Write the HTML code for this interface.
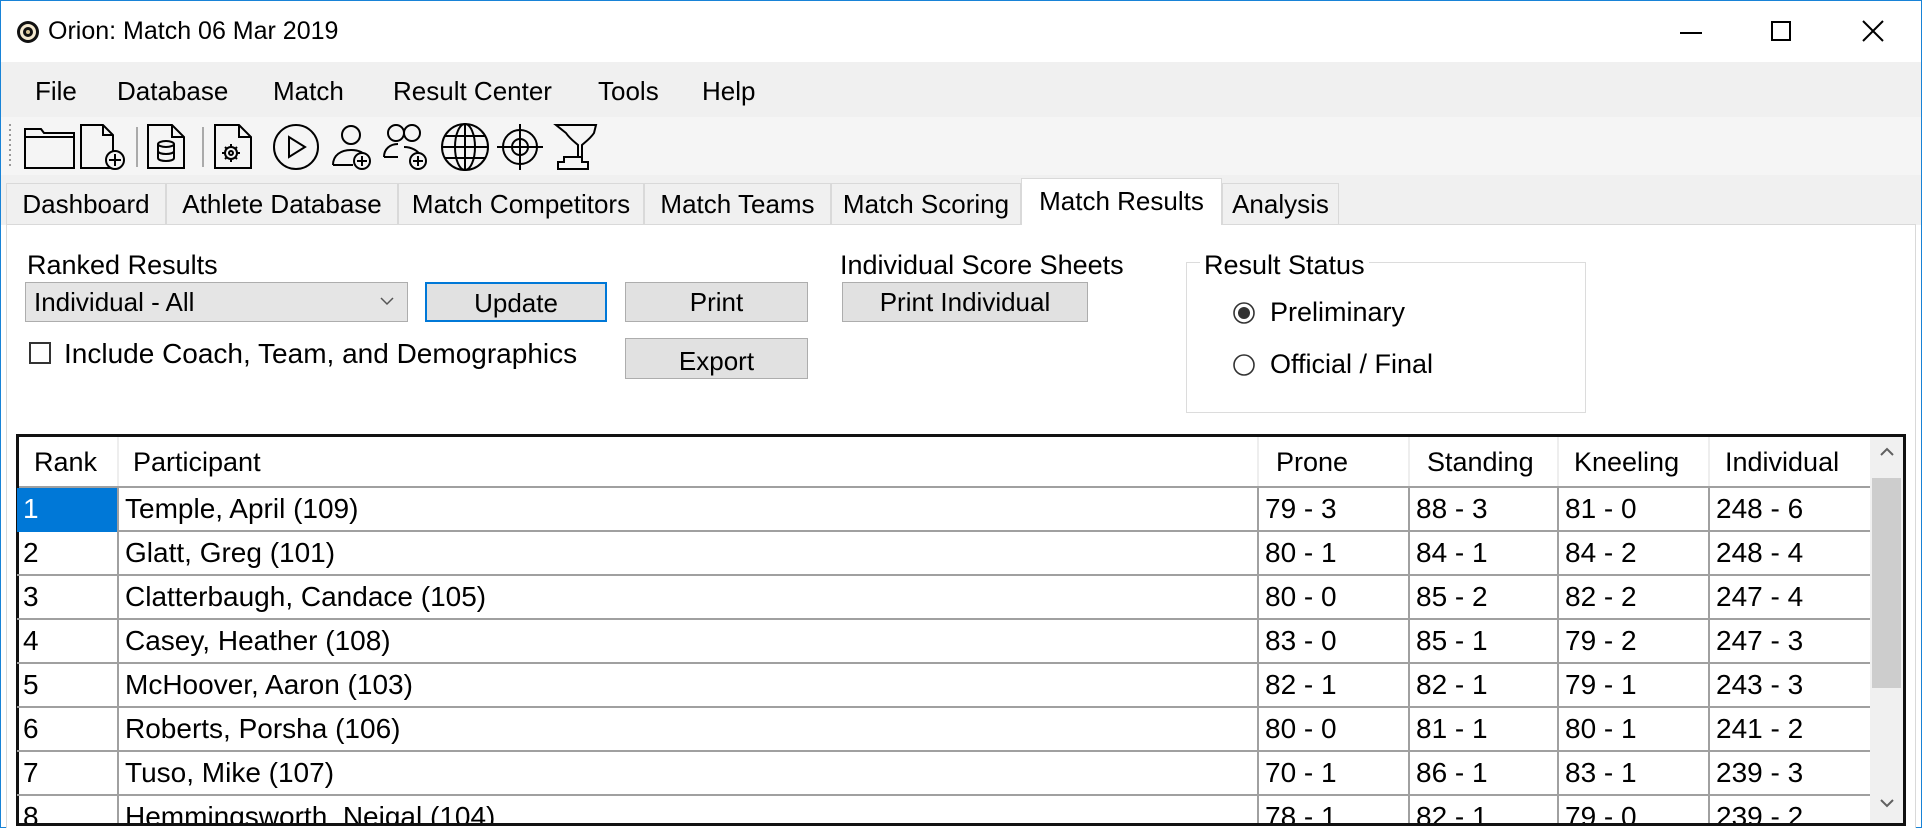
<!DOCTYPE html>
<html><head><meta charset="utf-8"><style>
*{margin:0;padding:0;box-sizing:border-box}
body{width:1922px;height:828px;position:relative;background:#fff;font-family:"Liberation Sans",Arial,sans-serif;color:#000;overflow:hidden}
.a{position:absolute;white-space:nowrap}
.t{font-size:26px;line-height:30px}
.btn{position:absolute;background:#e1e1e1;border:1px solid #adadad;font-size:26px;text-align:center}
.tab{position:absolute;top:183px;height:41px;background:#f0f0f0;border:1px solid #d9d9d9;border-bottom:none;font-size:26px;line-height:40px;text-align:center}
.row{position:absolute;left:17px;width:1853px;height:44px;border-bottom:2px solid #a0a0a0;font-size:28px;line-height:42px}
.c{position:absolute;top:0;height:44px;border-right:2px solid #a0a0a0;padding-left:6px}
</style></head><body>
<div class="a" style="left:0;top:0;width:1922px;height:828px;border:1px solid #1883d7"></div>
<svg class="a" style="left:16px;top:20px" width="24" height="24" viewBox="0 0 24 24"><circle cx="12" cy="12" r="11" fill="#111"/><circle cx="12" cy="12" r="8" fill="#f4e9cf"/><circle cx="12" cy="12" r="5" fill="#111"/><circle cx="12" cy="12" r="2" fill="#d9c79a"/></svg>
<div class="a" style="left:48px;top:16px;font-size:25px;line-height:30px">Orion: Match 06 Mar 2019</div>
<div class="a" style="left:1680px;top:32px;width:22px;height:2px;background:#000"></div>
<div class="a" style="left:1771px;top:21px;width:20px;height:20px;border:2px solid #000"></div>
<svg class="a" style="left:1862px;top:20px" width="22" height="22"><path d="M1 1L21 21M21 1L1 21" stroke="#000" stroke-width="2"/></svg>
<div class="a" style="left:1px;top:62px;width:1920px;height:55px;background:#f0f0f0"></div>
<div class="a t" style="left:35px;top:76px">File</div>
<div class="a t" style="left:117px;top:76px">Database</div>
<div class="a t" style="left:273px;top:76px">Match</div>
<div class="a t" style="left:393px;top:76px">Result Center</div>
<div class="a t" style="left:598px;top:76px">Tools</div>
<div class="a t" style="left:702px;top:76px">Help</div>
<div class="a" style="left:1px;top:117px;width:1920px;height:58px;background:#f5f5f5"></div>
<svg class="a" style="left:0;top:117px" width="620" height="58" viewBox="0 0 620 58" fill="none" stroke="#000" stroke-width="2">
<path d="M10 7v44" stroke="#999" stroke-dasharray="2 3"/>
<path d="M25 12h16l3 4h30v35H25z M25 20h49"/>
<path d="M81 8h22l10 10v33H81z M103 8v10h10"/><circle cx="115" cy="43" r="9" fill="#f5f5f5"/><path d="M115 37v12M109 43h12"/>
<path d="M137 10v40" stroke="#aaa"/>
<path d="M148 8h24l12 12v31H148z M172 8v12h12"/><ellipse cx="166" cy="27" rx="8" ry="3"/><path d="M158 27v14c0 4 16 4 16 0V27 M158 34c0 4 16 4 16 0"/>
<path d="M203 10v40" stroke="#aaa"/>
<path d="M215 8h24l12 12v31H215z M239 8v12h12"/><circle cx="231" cy="36" r="6"/><circle cx="231" cy="36" r="2"/><path d="M231 27v3M231 42v3M222 36h3M237 36h3M225 30l2 2M235 40l2 2M237 30l-2 2M225 42l2-2"/>
<circle cx="296" cy="30" r="22"/><path d="M289 20v20l16-10z"/>
<circle cx="351" cy="18" r="9"/><path d="M333 48c0-10 8-15 18-15s14 4 16 8 M333 48h20"/><circle cx="362" cy="44" r="8" fill="#f5f5f5"/><path d="M362 39v10M357 44h10"/>
<circle cx="396" cy="16" r="8"/><circle cx="412" cy="16" r="8"/><path d="M384 40c0-8 6-13 14-13 M384 40h14 M404 30c8 0 14 4 16 8"/><circle cx="418" cy="44" r="8" fill="#f5f5f5"/><path d="M418 39v10M413 44h10"/>
<circle cx="465" cy="30" r="23"/><ellipse cx="465" cy="30" rx="10" ry="23"/><path d="M442 30h46M445 19h40M445 41h40M465 7v46"/>
<circle cx="520" cy="30" r="17"/><circle cx="520" cy="30" r="8"/><path d="M520 7v46M497 30h46"/>
<path d="M556 8h40l-2 8c-4 6-10 10-12 12v12h-4V28c-2-2-8-6-12-12z M564 40h18v5h6v7h-30v-7h6z"/>
</svg>
<div class="a" style="left:1px;top:175px;width:1920px;height:50px;background:#f0f0f0"></div>
<div class="tab" style="left:6px;width:160px">Dashboard</div>
<div class="tab" style="left:166px;width:232px">Athlete Database</div>
<div class="tab" style="left:398px;width:246px">Match Competitors</div>
<div class="tab" style="left:644px;width:187px">Match Teams</div>
<div class="tab" style="left:831px;width:190px">Match Scoring</div>
<div class="tab" style="left:1222px;width:117px">Analysis</div>
<div class="a" style="left:6px;top:224px;width:1910px;height:604px;background:#fff;border:1px solid #d9d9d9;border-bottom:none"></div>
<div class="tab" style="left:1021px;top:178px;width:201px;height:47px;background:#fff;line-height:44px;border-color:#d9d9d9">Match Results</div>
<div class="a" style="left:27px;top:250px;font-size:27px;line-height:30px">Ranked Results</div>
<div class="a" style="left:25px;top:282px;width:383px;height:40px;background:#e5e5e5;border:1px solid #adadad;font-size:26px;line-height:38px;padding-left:8px">Individual - All</div>
<svg class="a" style="left:380px;top:296px" width="14" height="10"><path d="M1 2l6 6 6-6" stroke="#555" stroke-width="1.5" fill="none"/></svg>
<div class="btn" style="left:425px;top:282px;width:182px;height:40px;border:2px solid #0078d7;line-height:38px">Update</div>
<div class="btn" style="left:625px;top:282px;width:183px;height:40px;line-height:38px">Print</div>
<div class="btn" style="left:625px;top:338px;width:183px;height:41px;line-height:44px">Export</div>
<div class="a" style="left:29px;top:342px;width:22px;height:22px;border:2px solid #333;background:#fff"></div>
<div class="a" style="left:64px;top:339px;font-size:28px;line-height:30px">Include Coach, Team, and Demographics</div>
<div class="a" style="left:840px;top:250px;font-size:27px;line-height:30px">Individual Score Sheets</div>
<div class="btn" style="left:842px;top:282px;width:246px;height:40px;line-height:38px">Print Individual</div>
<div class="a" style="left:1186px;top:262px;width:400px;height:151px;border:1px solid #dcdcdc"></div>
<div class="a" style="left:1200px;top:250px;font-size:27px;line-height:30px;background:#fff;padding:0 4px">Result Status</div>
<svg class="a" style="left:1232px;top:301px" width="24" height="24"><circle cx="12" cy="12" r="10" fill="#fff" stroke="#333" stroke-width="1.6"/><circle cx="12" cy="12" r="6" fill="#333"/></svg>
<div class="a" style="left:1270px;top:297px;font-size:27px;line-height:30px">Preliminary</div>
<svg class="a" style="left:1232px;top:353px" width="24" height="24"><circle cx="12" cy="12" r="10" fill="#fff" stroke="#333" stroke-width="1.6"/></svg>
<div class="a" style="left:1270px;top:349px;font-size:27px;line-height:30px">Official / Final</div>
<div class="a" style="left:16px;top:434px;width:1890px;height:392px;border:3px solid #111;background:#fff"></div>
<div class="a" style="left:19px;top:437px;width:1851px;height:50px;font-size:27px;line-height:50px">
<div class="a" style="left:0;top:0;width:100px;height:50px;border-right:2px solid #eee;padding-left:15px">Rank</div>
<div class="a" style="left:100px;top:0;width:1140px;height:50px;border-right:2px solid #eee;padding-left:14px">Participant</div>
<div class="a" style="left:1240px;top:0;width:151px;height:50px;border-right:2px solid #eee;padding-left:17px">Prone</div>
<div class="a" style="left:1391px;top:0;width:149px;height:50px;border-right:2px solid #eee;padding-left:17px">Standing</div>
<div class="a" style="left:1540px;top:0;width:151px;height:50px;border-right:2px solid #eee;padding-left:15px">Kneeling</div>
<div class="a" style="left:1691px;top:0;width:160px;height:50px;padding-left:15px">Individual</div>
</div>
<div class="a" style="left:19px;top:486px;width:1851px;height:2px;background:#a0a0a0"></div>
<div class="row" style="top:488px"><div class="c" style="left:0;width:102px;background:#0078d7;color:#fff">1</div><div class="c" style="left:102px;width:1140px">Temple, April (109)</div><div class="c" style="left:1242px;width:151px">79 - 3</div><div class="c" style="left:1393px;width:149px">88 - 3</div><div class="c" style="left:1542px;width:151px">81 - 0</div><div class="c" style="left:1693px;width:160px;border:none">248 - 6</div></div>
<div class="row" style="top:532px"><div class="c" style="left:0;width:102px">2</div><div class="c" style="left:102px;width:1140px">Glatt, Greg (101)</div><div class="c" style="left:1242px;width:151px">80 - 1</div><div class="c" style="left:1393px;width:149px">84 - 1</div><div class="c" style="left:1542px;width:151px">84 - 2</div><div class="c" style="left:1693px;width:160px;border:none">248 - 4</div></div>
<div class="row" style="top:576px"><div class="c" style="left:0;width:102px">3</div><div class="c" style="left:102px;width:1140px">Clatterbaugh, Candace (105)</div><div class="c" style="left:1242px;width:151px">80 - 0</div><div class="c" style="left:1393px;width:149px">85 - 2</div><div class="c" style="left:1542px;width:151px">82 - 2</div><div class="c" style="left:1693px;width:160px;border:none">247 - 4</div></div>
<div class="row" style="top:620px"><div class="c" style="left:0;width:102px">4</div><div class="c" style="left:102px;width:1140px">Casey, Heather (108)</div><div class="c" style="left:1242px;width:151px">83 - 0</div><div class="c" style="left:1393px;width:149px">85 - 1</div><div class="c" style="left:1542px;width:151px">79 - 2</div><div class="c" style="left:1693px;width:160px;border:none">247 - 3</div></div>
<div class="row" style="top:664px"><div class="c" style="left:0;width:102px">5</div><div class="c" style="left:102px;width:1140px">McHoover, Aaron (103)</div><div class="c" style="left:1242px;width:151px">82 - 1</div><div class="c" style="left:1393px;width:149px">82 - 1</div><div class="c" style="left:1542px;width:151px">79 - 1</div><div class="c" style="left:1693px;width:160px;border:none">243 - 3</div></div>
<div class="row" style="top:708px"><div class="c" style="left:0;width:102px">6</div><div class="c" style="left:102px;width:1140px">Roberts, Porsha (106)</div><div class="c" style="left:1242px;width:151px">80 - 0</div><div class="c" style="left:1393px;width:149px">81 - 1</div><div class="c" style="left:1542px;width:151px">80 - 1</div><div class="c" style="left:1693px;width:160px;border:none">241 - 2</div></div>
<div class="row" style="top:752px"><div class="c" style="left:0;width:102px">7</div><div class="c" style="left:102px;width:1140px">Tuso, Mike (107)</div><div class="c" style="left:1242px;width:151px">70 - 1</div><div class="c" style="left:1393px;width:149px">86 - 1</div><div class="c" style="left:1542px;width:151px">83 - 1</div><div class="c" style="left:1693px;width:160px;border:none">239 - 3</div></div>
<div class="row" style="top:796px;height:27px;overflow:hidden;border:none"><div class="c" style="left:0;width:102px">8</div><div class="c" style="left:102px;width:1140px">Hemmingsworth, Neigal (104)</div><div class="c" style="left:1242px;width:151px">78 - 1</div><div class="c" style="left:1393px;width:149px">82 - 1</div><div class="c" style="left:1542px;width:151px">79 - 0</div><div class="c" style="left:1693px;width:160px;border:none">239 - 2</div></div>
<div class="a" style="left:1870px;top:437px;width:33px;height:386px;background:#f0f0f0"></div>
<div class="a" style="left:1872px;top:478px;width:29px;height:210px;background:#cdcdcd"></div>
<svg class="a" style="left:1879px;top:446px" width="16" height="12"><path d="M2 9l6-6 6 6" stroke="#606060" stroke-width="2" fill="none"/></svg>
<svg class="a" style="left:1879px;top:797px" width="16" height="12"><path d="M2 3l6 6 6-6" stroke="#606060" stroke-width="2" fill="none"/></svg>
</body></html>
